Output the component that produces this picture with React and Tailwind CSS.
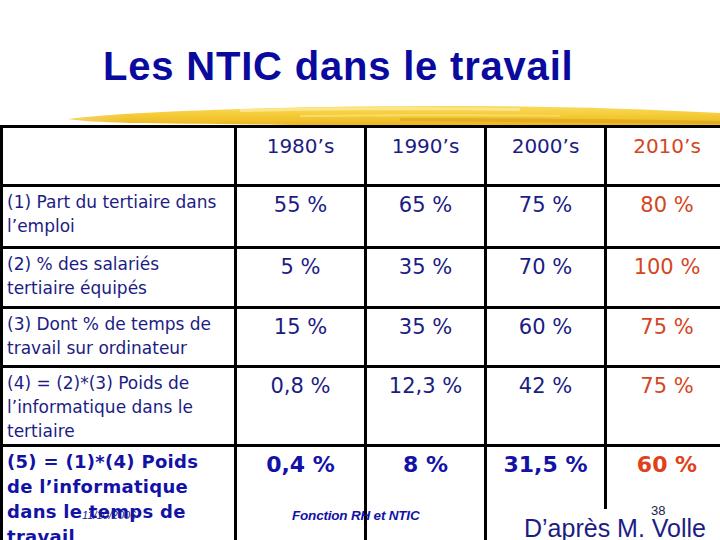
const rows = [
  {
    label: ["(1) Part du tertiaire dans", "l’emploi"],
    values: ["55 %", "65 %", "75 %", "80 %"],
    h: "h-[62px]",
  },
  {
    label: ["(2) % des salariés", "tertiaire équipés"],
    values: ["5 %", "35 %", "70 %", "100 %"],
    h: "h-[60px]",
  },
  {
    label: ["(3) Dont % de temps de", "travail sur ordinateur"],
    values: ["15 %", "35 %", "60 %", "75 %"],
    h: "h-[59px]",
  },
  {
    label: ["(4) = (2)*(3) Poids de", "l’informatique dans le", "tertiaire"],
    values: ["0,8 %", "12,3 %", "42 %", "75 %"],
    h: "h-[79px]",
  },
];

const years = ["1980’s", "1990’s", "2000’s", "2010’s"];

function Brush() {
  return (
    <svg width="720" height="36" viewBox="0 0 720 36" className="block">
      <defs>
        <linearGradient id="brushV" x1="0" y1="0" x2="0" y2="1">
          <stop offset="0" stopColor="#f9dc5c" />
          <stop offset="0.45" stopColor="#f5cb38" />
          <stop offset="1" stopColor="#ebb522" />
        </linearGradient>
        <linearGradient id="brushH" x1="0" y1="0" x2="1" y2="0">
          <stop offset="0" stopColor="#ffffff" stopOpacity="0.6" />
          <stop offset="0.18" stopColor="#ffffff" stopOpacity="0" />
          <stop offset="1" stopColor="#ffffff" stopOpacity="0" />
        </linearGradient>
      </defs>
      <path
        d="M68 30 C100 26 150 23 210 21 C290 18 370 17 460 17 C560 17 640 20 720 24 L720 37 C620 37 520 37 420 37 C300 36 200 35 130 34 C100 33 80 32 68 30 Z"
        fill="url(#brushV)"
      />
      <path
        d="M240 20 C330 18 420 18 520 19 L520 22 C420 21 330 21 240 23 Z"
        fill="#fde99a"
        opacity="0.8"
      />
      <path
        d="M300 26 C400 25 480 25 560 26 L560 27.5 C480 27 400 27 300 28 Z"
        fill="#fbe27c"
        opacity="0.7"
      />
      <path
        d="M400 29 C500 29 610 30 720 32 L720 35 C610 34 500 33 400 32 Z"
        fill="#d9a01a"
        opacity="0.6"
      />
      <rect x="0" y="0" width="720" height="36" fill="url(#brushH)" />
    </svg>
  );
}

export default function App() {
  return (
    <div className="relative h-[540px] w-[720px] overflow-hidden bg-white">
      <div className="flex flex-col">
        <h1 className="h-[89px] pl-[103px] pt-[43px] font-['Liberation_Sans',Arial,sans-serif] text-[40px] font-bold leading-[46px] tracking-[0.8px] text-[#0a0a9e]">
          Les NTIC dans le travail
        </h1>
        <Brush />

        <div className="grid w-[727px] grid-cols-[234px_130px_120px_120px_123px] border-l-[3px] border-t-[3px] border-black font-['DejaVu_Sans',Verdana,sans-serif] text-[#1c1c84]">
          <div className="h-[59px] border-b-[3px] border-r-[3px] border-black" />
          {years.map((y, i) => (
            <div
              key={y}
              className={`h-[59px] border-b-[3px] border-r-[3px] border-black pt-[6px] text-center text-[20px] leading-[24px] ${
                i === 3 ? "text-[#d4461e]" : ""
              }`}
            >
              {y}
            </div>
          ))}

          {rows.map((row) => (
            <div key={row.label[0]} className="contents">
              <div
                className={`${row.h} whitespace-nowrap border-b-[3px] border-r-[3px] border-black pl-[4px] pt-[3px] text-[17px] leading-[24px]`}
              >
                {row.label.map((l) => (
                  <div key={l}>{l}</div>
                ))}
              </div>
              {row.values.map((v, i) => (
                <div
                  key={i}
                  className={`${row.h} border-b-[3px] border-r-[3px] border-black pt-[6px] text-center text-[21px] leading-[24px] ${
                    i === 3 ? "text-[#d4461e]" : ""
                  }`}
                >
                  {v}
                </div>
              ))}
            </div>
          ))}

          <div className="h-[100px] whitespace-nowrap border-r-[3px] border-black pl-[4px] pt-[2px] text-[18px] font-bold leading-[25px] tracking-[0.3px] text-[#1212a6]">
            <div>(5) = (1)*(4) Poids</div>
            <div>de l’informatique</div>
            <div>dans le temps de</div>
            <div>travail</div>
          </div>
          {["0,4 %", "8 %", "31,5 %", "60 %"].map((v, i) => (
            <div
              key={v}
              className={`h-[100px] border-r-[3px] border-black pt-[6px] text-center text-[22px] font-bold leading-[24px] ${
                i === 3 ? "text-[#e0401a]" : "text-[#1212a6]"
              }`}
            >
              {v}
            </div>
          ))}
        </div>
      </div>

      {/* footer overlays */}
      <div className="absolute left-[82px] top-[510px] font-['Liberation_Sans',Arial,sans-serif] text-[11px] italic leading-none text-[#1c1c84]">
        11/10/2006
      </div>
      <div className="absolute left-[292px] top-[509px] font-['Liberation_Sans',Arial,sans-serif] text-[13.5px] font-bold italic leading-none tracking-[-0.2px] text-[#1212a6]">
        Fonction RH et NTIC
      </div>
      <div className="absolute left-[518px] top-[509px] h-[40px] w-[210px] bg-white pl-[6px] pt-[5px] font-['Liberation_Sans',Arial,sans-serif] text-[25px] leading-[28px] text-[#1c1c84]">
        D’après M. Volle
      </div>
      <div className="absolute left-[651px] top-[504px] font-['Liberation_Sans',Arial,sans-serif] text-[13px] leading-none text-[#222244]">
        38
      </div>
    </div>
  );
}
